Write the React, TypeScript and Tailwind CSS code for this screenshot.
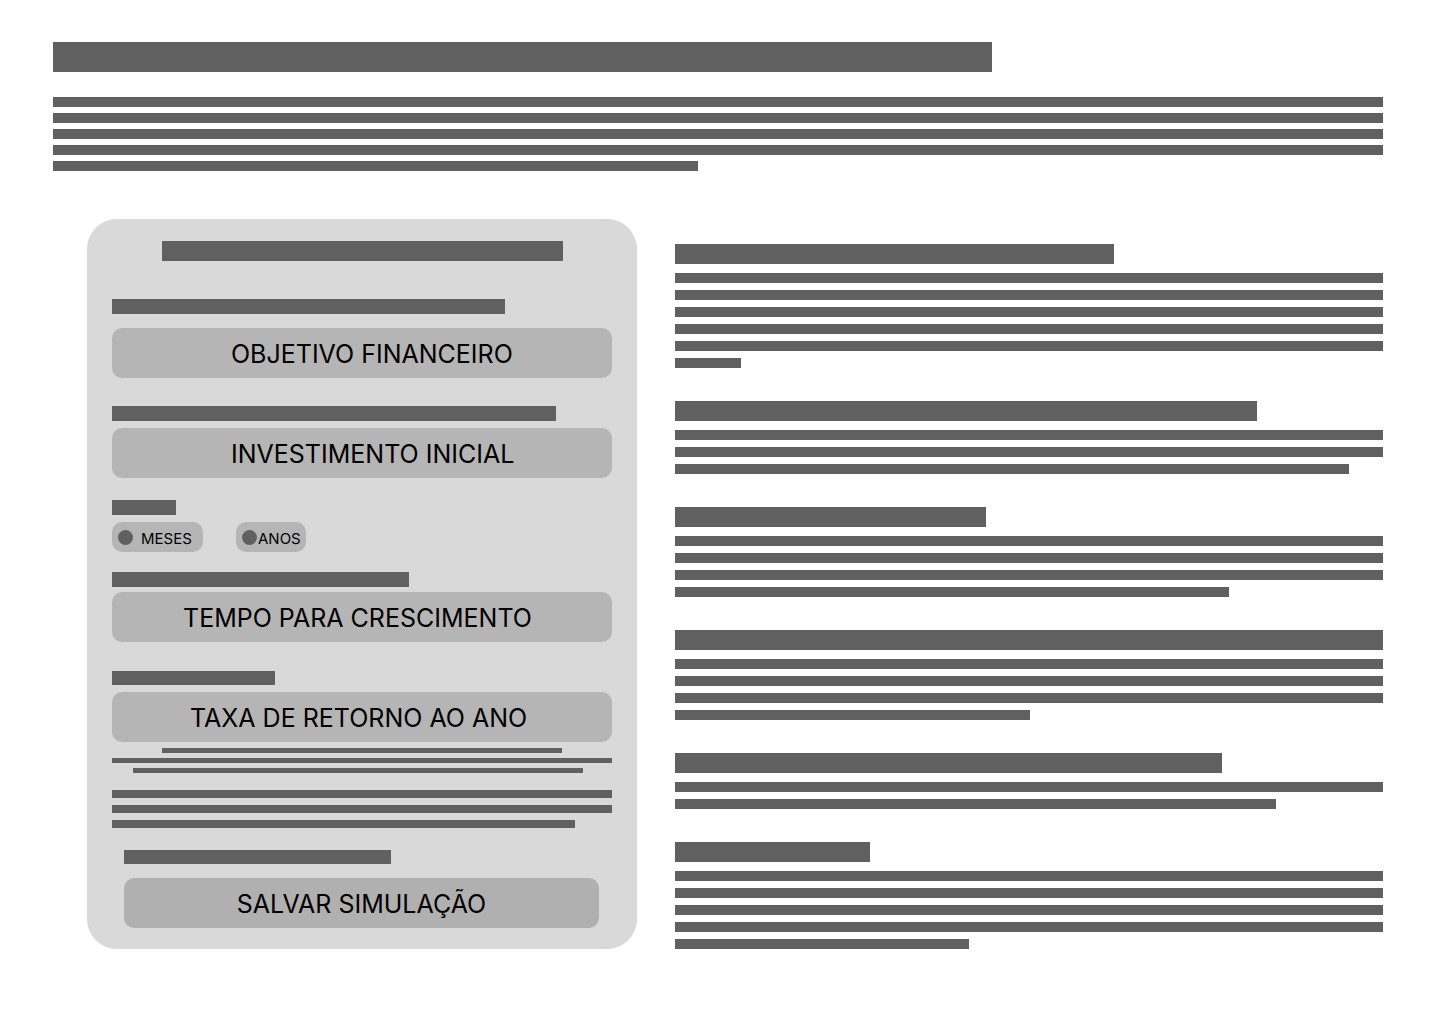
const bar = "bg-[#606060]";

const topLines = ["w-full", "w-full", "w-full", "w-full", "w-[645px]"];

const sections = [
  { head: "w-[439px]", lines: ["w-full", "w-full", "w-full", "w-full", "w-full", "w-[66px]"] },
  { head: "w-[582px]", lines: ["w-full", "w-full", "w-[674px]"] },
  { head: "w-[311px]", lines: ["w-full", "w-full", "w-full", "w-[554px]"] },
  { head: "w-full", lines: ["w-full", "w-full", "w-full", "w-[355px]"] },
  { head: "w-[547px]", lines: ["w-full", "w-[601px]"] },
  { head: "w-[195px]", lines: ["w-full", "w-full", "w-full", "w-full", "w-[294px]"] },
];

const Field = ({ label, pad }: { label: string; pad: string }) => (
  <div className={`flex h-[50px] items-center rounded-[10px] bg-[#b5b5b5] text-[25px] text-black ${pad}`}>
    <span className="leading-none pt-[3px]">{label}</span>
  </div>
);

const Radio = ({ label, w, gap }: { label: string; w: string; gap: string }) => (
  <div className={`flex h-[30px] items-center rounded-[10px] bg-[#b5b5b5] pl-[6px] text-[15px] text-black ${w} ${gap}`}>
    <span className="h-[15px] w-[15px] shrink-0 rounded-full bg-[#606060]" />
    <span className="leading-none pt-[2px]">{label}</span>
  </div>
);

const SimulatorCard = () => (
  <div className="flex h-[730px] w-[550px] shrink-0 flex-col rounded-[30px] bg-[#d9d9d9] px-[25px] pt-[22px]">
    <div className={`mx-auto h-[20px] w-[401px] ${bar}`} />

    <div className={`mt-[38px] h-[15px] w-[393px] ${bar}`} />
    <div className="mt-[14px]">
      <Field label="OBJETIVO FINANCEIRO" pad="pl-[119px]" />
    </div>

    <div className={`mt-[28px] h-[15px] w-[444px] ${bar}`} />
    <div className="mt-[7px]">
      <Field label="INVESTIMENTO INICIAL" pad="pl-[119px]" />
    </div>

    <div className={`mt-[22px] h-[15px] w-[64px] ${bar}`} />
    <div className="mt-[7px] flex gap-[33px]">
      <Radio label="MESES" w="w-[91px]" gap="gap-[8px]" />
      <Radio label="ANOS" w="w-[70px]" gap="gap-[1px]" />
    </div>

    <div className={`mt-[20px] h-[15px] w-[297px] ${bar}`} />
    <div className="mt-[5px]">
      <Field label="TEMPO PARA CRESCIMENTO" pad="pl-[71px]" />
    </div>

    <div className={`mt-[29px] h-[14px] w-[163px] ${bar}`} />
    <div className="mt-[7px]">
      <Field label="TAXA DE RETORNO AO ANO" pad="pl-[78px]" />
    </div>

    <div className="mt-[6px] flex flex-col gap-[5px]">
      <div className={`ml-[50px] h-[5px] w-[400px] ${bar}`} />
      <div className={`h-[5px] w-full ${bar}`} />
      <div className={`ml-[21px] h-[5px] w-[450px] ${bar}`} />
    </div>

    <div className="mt-[17px] flex flex-col gap-[7px]">
      <div className={`h-[8px] w-full ${bar}`} />
      <div className={`h-[8px] w-full ${bar}`} />
      <div className={`h-[8px] w-[463px] ${bar}`} />
    </div>

    <div className={`ml-[12px] mt-[22px] h-[14px] w-[267px] ${bar}`} />
    <button className="ml-[12px] mt-[14px] flex h-[50px] w-[475px] items-center justify-center rounded-[10px] bg-[#b0b0b0] text-[25px] text-black">
      <span className="leading-none pt-[3px]">SALVAR SIMULAÇÃO</span>
    </button>
  </div>
);

export default function App() {
  return (
    <div className="min-h-[1024px] w-[1440px] bg-white px-[53px] pt-[42px] font-['Inter',sans-serif]">
      <div className={`h-[30px] w-[939px] ${bar}`} />
      <div className="mt-[25px] flex w-[1330px] flex-col gap-[6px]">
        {topLines.map((w, i) => (
          <div key={i} className={`h-[10px] ${w} ${bar}`} />
        ))}
      </div>

      <div className="mt-[48px] flex">
        <div className="ml-[34px]">
          <SimulatorCard />
        </div>

        <div className="ml-[38px] flex w-[708px] flex-col gap-[33px] pt-[25px]">
          {sections.map((s, i) => (
            <div key={i} className="flex flex-col">
              <div className={`h-[20px] ${s.head} ${bar}`} />
              <div className="mt-[9px] flex flex-col gap-[7px]">
                {s.lines.map((w, j) => (
                  <div key={j} className={`h-[10px] ${w} ${bar}`} />
                ))}
              </div>
            </div>
          ))}
        </div>
      </div>
    </div>
  );
}
